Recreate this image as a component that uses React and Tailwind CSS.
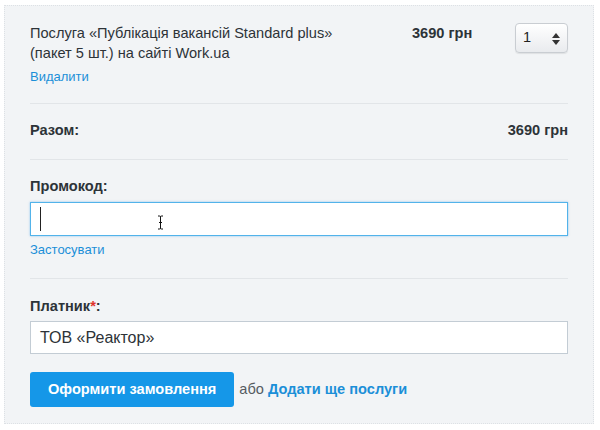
import React from 'react';

const font = { fontFamily: '"Liberation Sans", Arial, sans-serif' };

function QtySelect() {
  return (
    <div className="relative w-[53px] h-[30px] rounded-[4px] border border-[#c9cdd2] bg-gradient-to-b from-white to-[#e9ebee] shadow-[0_1px_1px_rgba(0,0,0,0.08)] flex items-center pl-[7px] text-[14.6px] text-[#222]">
      1
      <svg className="absolute right-[7px] top-[9px]" width="8" height="12" viewBox="0 0 8 12">
        <path d="M4 0 L8 5 H0 Z" fill="#333" />
        <path d="M0 7 H8 L4 12 Z" fill="#333" />
      </svg>
    </div>
  );
}

export default function App() {
  return (
    <div className="w-[600px] h-[430px] bg-white pt-[5px] pl-[4px]" style={font}>
      <div className="w-[590px] h-[419px] border border-dotted border-[#dde1e5] bg-[#f2f4f6] px-[25px] text-[#2d3338]">
        {/* order line */}
        <div className="pt-[17px] pb-[17px] border-b border-[#e2e5e8]">
          <div className="flex items-start">
            <div className="w-[382px] pr-[46px] text-[14.6px] leading-[20px]">
              Послуга «Публікація вакансій Standard plus» (пакет 5 шт.) на сайті Work.ua
            </div>
            <div className="text-[14.6px] leading-[20px] font-bold">3690 грн</div>
            <div className="ml-auto">
              <QtySelect />
            </div>
          </div>
          <a className="block mt-[5px] text-[13px] leading-[18px] text-[#1b8fd8]">Видалити</a>
        </div>

        {/* total */}
        <div className="pt-[16px] pb-[19px] border-b border-[#e2e5e8] flex justify-between text-[14.6px] leading-[20px] font-bold">
          <span>Разом:</span>
          <span>3690 грн</span>
        </div>

        {/* promo code */}
        <div className="pt-[16px] pb-[19px] border-b border-[#e2e5e8]">
          <div className="text-[14.6px] leading-[20px] font-bold">Промокод:</div>
          <div className="relative mt-[6px] h-[34px] bg-white border border-[#52b3ea] shadow-[0_0_2px_rgba(40,150,230,0.5)]">
            <span className="absolute left-[9px] top-[4px] w-px h-[24px] bg-[#222]" />
            <svg className="absolute left-[126px] top-[12px]" width="7" height="15" viewBox="0 0 7 15">
              <path d="M1 1 H2.5 Q3.5 1 3.5 2 V13 Q3.5 14 2.5 14 H1 M6 1 H4.5 Q3.5 1 3.5 2 M3.5 13 Q3.5 14 4.5 14 H6 M2 7.5 H5" stroke="#111" strokeWidth="1" fill="none" />
            </svg>
          </div>
          <a className="block mt-[5px] text-[13px] leading-[18px] text-[#1b8fd8]">Застосувати</a>
        </div>

        {/* payer */}
        <div className="pt-[17px]">
          <div className="text-[14.6px] leading-[20px] font-bold">
            Платник<span className="text-[#e0342b]">*</span>:
          </div>
          <div className="mt-[5px] h-[33px] bg-white border border-[#c3ccd4] flex items-center px-[9px] text-[16px]">
            ТОВ «Реактор»
          </div>
          <div className="mt-[18px] flex items-center text-[14.6px]">
            <button className="h-[35px] px-[18px] rounded-[3px] bg-[#1597e8] text-white font-bold text-[14.6px]">
              Оформити замовлення
            </button>
            <span className="ml-[5px] text-[#555b61]">або</span>
            <a className="ml-[4px] font-bold text-[#1b8fd8]">Додати ще послуги</a>
          </div>
        </div>
      </div>
    </div>
  );
}
